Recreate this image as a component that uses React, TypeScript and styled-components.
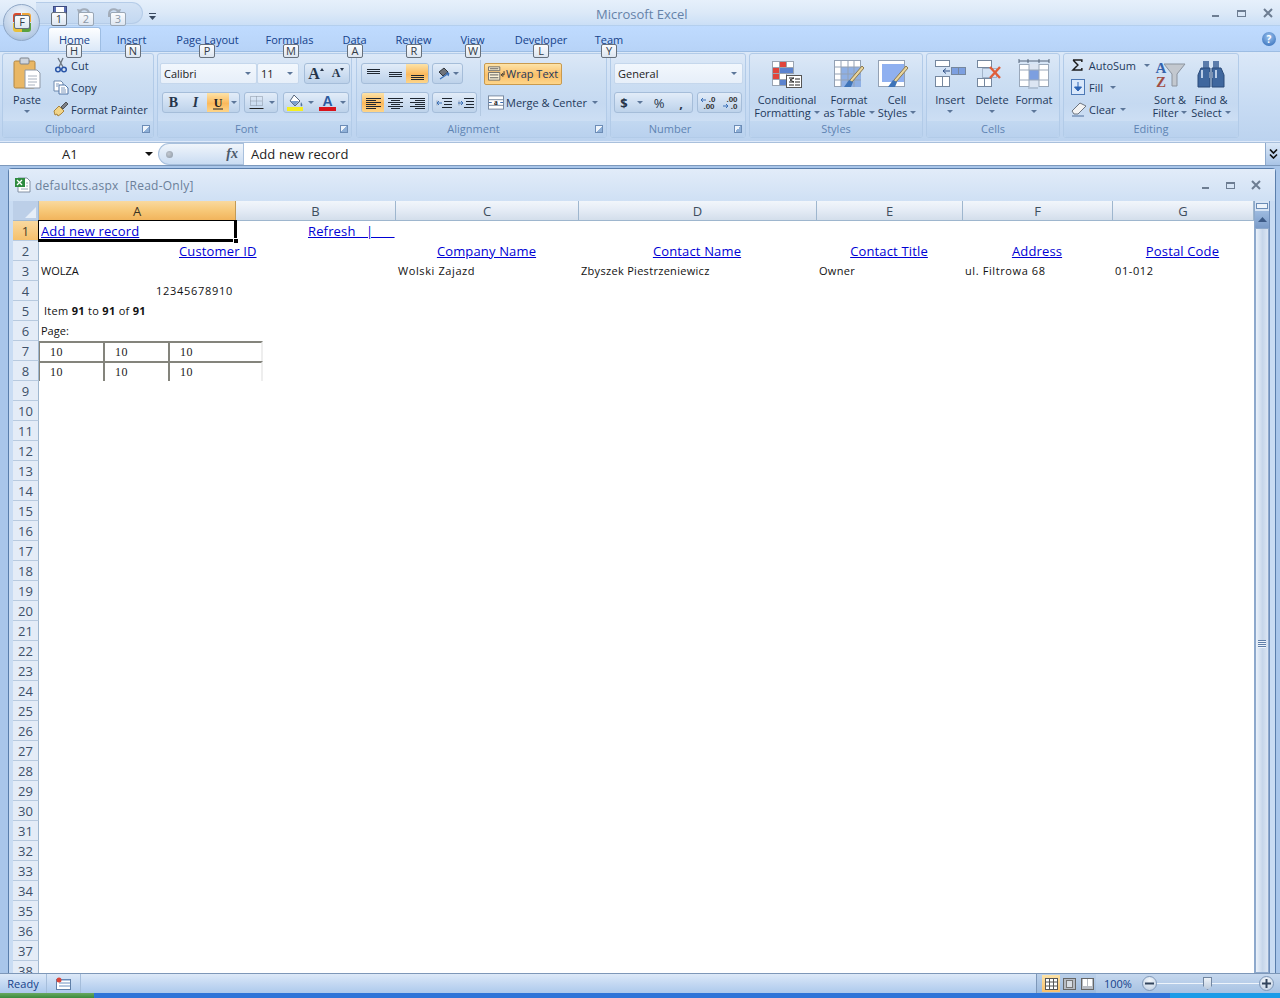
import React from "react";
import styled, { createGlobalStyle, css } from "styled-components";

const UI = `"Open Sans", "Noto Sans", "Liberation Sans", sans-serif`;
const INK = "#15428b";
const DARK = "#1e395b";

const Global = createGlobalStyle`
  html, body { margin: 0; padding: 0; background: #bfdbff; overflow: hidden; }
  *, *::before, *::after { box-sizing: border-box; }
`;

const Page = styled.div`
  position: relative;
  width: 1280px;
  height: 998px;
  overflow: hidden;
  display: flex;
  flex-direction: column;
  font-family: ${UI};
  font-size: 11px;
  color: ${DARK};
  background: #a9c6ea;
`;

/* ---------- title bar ---------- */
const TitleBar = styled.div`
  height: 26px;
  flex: none;
  display: flex;
  align-items: center;
  justify-content: flex-end;
  padding: 0 7px 0 0;
  gap: 16px;
  background: linear-gradient(#e6f0fb, #dce9f8 50%, #cbdff6);
  border-bottom: 1px solid #b4cfee;
`;

const AppTitle = styled.div`
  position: absolute;
  left: 596px;
  top: 5px;
  font-size: 13px;
  color: #6582a8;
`;

const QuickAccess = styled.div`
  position: absolute;
  left: 36px;
  top: 2px;
  width: 107px;
  height: 22px;
  padding: 3px 0 0 17px;
  display: flex;
  align-items: flex-start;
  border-radius: 0 11px 11px 0;
  background: linear-gradient(#d4e3f5, #c3d8f1);
  border: 1px solid #b5cce8;
  border-left: 0;
`;

const QuickSlot = styled.div<{ $w: number }>`
  width: ${(p) => p.$w}px;
  flex: none;
`;

const QuickMenu = styled.div`
  position: absolute;
  left: 149px;
  top: 8px;
`;

const OfficeOrb = styled.div`
  position: absolute;
  left: 3px;
  top: 4px;
  width: 37px;
  height: 37px;
  border-radius: 50%;
  background: radial-gradient(circle at 50% 30%, #f3f7fc, #b9cde6 70%, #8ea9ca);
  border: 1px solid #8fa7c6;
  display: flex;
  align-items: center;
  justify-content: center;
`;

const KeyTip = styled.span<{ $x: number; $y: number; $dim?: boolean }>`
  position: absolute;
  left: ${(p) => p.$x}px;
  top: ${(p) => p.$y}px;
  width: 16px;
  height: 14px;
  line-height: 12px;
  text-align: center;
  font-size: 11px;
  border: 1px solid ${(p) => (p.$dim ? "#9aa7b6" : "#66707c")};
  border-radius: 2px;
  color: ${(p) => (p.$dim ? "#8b97a6" : "#333c48")};
  background: linear-gradient(#fbfcfe, #dde6f1);
  z-index: 5;
`;

/* ---------- tabs ---------- */
const TabRow = styled.div`
  height: 25px;
  flex: none;
  display: flex;
  align-items: flex-end;
  padding-left: 48px;
  background: linear-gradient(#bfdbff, #b7d3f7);
`;

const Tab = styled.div<{ $active?: boolean; $w: number }>`
  width: ${(p) => p.$w}px;
  height: 24px;
  line-height: 25px;
  text-align: center;
  font-size: 11px;
  color: ${INK};
  ${(p) =>
    p.$active &&
    css`
      line-height: 23px;
      background: linear-gradient(#fdfeff, #dbe8f8);
      border: 1px solid #9dbde3;
      border-bottom: 0;
      border-radius: 3px 3px 0 0;
    `}
`;

const HelpDot = styled.div`
  position: absolute;
  left: 1262px;
  top: 32px;
  width: 14px;
  height: 14px;
  border-radius: 50%;
  background: radial-gradient(circle at 50% 35%, #9cc3ef, #2a66b5);
  color: #fff;
  font-size: 10px;
  font-weight: 700;
  line-height: 14px;
  text-align: center;
`;

/* ---------- ribbon ---------- */
const Ribbon = styled.div`
  height: 91px;
  flex: none;
  display: flex;
  padding: 1px 0 0 2px;
  background: linear-gradient(#dbe8f8, #c7dbf3 60%, #bcd3ef);
  border-top: 1px solid #9dbde3;
  border-bottom: 1px solid #dfeafa;
`;

const Group = styled.div<{ $w: number; $gap?: number }>`
  width: ${(p) => p.$w}px;
  margin-right: ${(p) => p.$gap ?? 3}px;
  height: 85px;
  flex: none;
  display: flex;
  flex-direction: column;
  border: 1px solid #b2cbe8;
  border-radius: 3px;
  background: linear-gradient(#dce8f7, #cddff3 30%, #c5d9f1 60%, #d3e3f6);
`;

const GroupBody = styled.div<{ $pad?: number }>`
  flex: 1;
  display: flex;
  min-height: 0;
  padding-left: ${(p) => p.$pad ?? 0}px;
`;

const GroupFoot = styled.div<{ $launcher?: boolean }>`
  position: relative;
  height: 16px;
  flex: none;
  line-height: 15px;
  text-align: center;
  padding-right: ${(p) => (p.$launcher ? 16 : 0)}px;
  color: #5f84b3;
  font-size: 11px;
  background: linear-gradient(#c2d8f1, #b9d1ee);
  border-radius: 0 0 2px 2px;
`;

const Launcher = styled.span`
  position: absolute;
  right: 3px;
  top: 4px;
  width: 8px;
  height: 8px;
  border: 1px solid #6c8cb6;
  background: linear-gradient(135deg, #eef4fb 50%, #8fb0d8 50%);
`;

const Column = styled.div<{ $w?: number; $top?: number; $gap?: number; $left?: number }>`
  display: flex;
  flex-direction: column;
  flex: none;
  ${(p) => p.$w && `width: ${p.$w}px;`}
  padding-top: ${(p) => p.$top ?? 0}px;
  margin-left: ${(p) => p.$left ?? 0}px;
  gap: ${(p) => p.$gap ?? 0}px;
`;

const Line = styled.div<{ $gap?: number; $left?: number }>`
  display: flex;
  align-items: center;
  gap: ${(p) => p.$gap ?? 0}px;
  margin-left: ${(p) => p.$left ?? 0}px;
`;

const SmallCmd = styled.div<{ $gap?: number; $left?: number }>`
  height: 22px;
  display: flex;
  align-items: center;
  gap: ${(p) => p.$gap ?? 2}px;
  padding-left: ${(p) => p.$left ?? 0}px;
  font-size: 11px;
  color: ${DARK};
  white-space: nowrap;
`;

const Caret = styled.span<{ $m?: number }>`
  display: inline-block;
  width: 0;
  height: 0;
  margin-left: ${(p) => p.$m ?? 3}px;
  border-left: 3px solid transparent;
  border-right: 3px solid transparent;
  border-top: 3px solid #5c7699;
  flex: none;
`;

const BigCaret = styled(Caret)`
  margin-top: 4px;
  margin-left: 0;
`;

const NameCaret = styled(Caret)`
  margin-left: 0;
  border-top: 4px solid #111;
  border-left-width: 4px;
  border-right-width: 4px;
`;

const Big = styled.div<{ $w: number }>`
  width: ${(p) => p.$w}px;
  flex: none;
  display: flex;
  flex-direction: column;
  align-items: center;
  text-align: center;
  padding-top: 3px;
  line-height: 13px;
  font-size: 11px;
  white-space: nowrap;
  color: ${DARK};
`;

const BigIcon = styled.div<{ $nudge?: number }>`
  height: 34px;
  margin-bottom: 2px;
  margin-right: ${(p) => p.$nudge ?? 0}px;
  display: flex;
  align-items: center;
  justify-content: center;
`;

const Combo = styled.div<{ $w: number }>`
  width: ${(p) => p.$w}px;
  height: 21px;
  display: flex;
  align-items: center;
  justify-content: space-between;
  padding: 0 5px 0 3px;
  background: linear-gradient(#f2f7fd, #e7eff9);
  border: 1px solid #c5d7ec;
  border-radius: 2px;
  color: #222;
  font-size: 11px;
`;

const BtnGroup = styled.div<{ $left?: number }>`
  display: flex;
  height: 21px;
  flex: none;
  margin-left: ${(p) => p.$left ?? 0}px;
  border: 1px solid #a5bdd9;
  border-radius: 3px;
  background: linear-gradient(#e2ecf8, #cfdff2 50%, #bdd2ea);
  overflow: hidden;
`;

const ToolBtn = styled.div<{ $w?: number; $on?: boolean }>`
  width: ${(p) => p.$w ?? 22}px;
  display: flex;
  align-items: center;
  justify-content: center;
  color: #26354a;
  ${(p) =>
    p.$on &&
    css`
      background: linear-gradient(#fde3a8, #fbb95c 55%, #fdd58a);
    `}
`;

const Glyph = styled.span<{ $size: number; $serif?: boolean; $italic?: boolean; $weight?: number }>`
  font-family: ${(p) => (p.$serif ? `"Liberation Serif", serif` : UI)};
  font-size: ${(p) => p.$size}px;
  font-style: ${(p) => (p.$italic ? "italic" : "normal")};
  font-weight: ${(p) => p.$weight ?? 700};
`;

const TinyUp = styled.span`
  align-self: flex-start;
  margin: 4px 0 0 0;
  width: 0;
  height: 0;
  border-left: 2px solid transparent;
  border-right: 2px solid transparent;
  border-bottom: 3px solid #26354a;
`;

const TinyDown = styled(TinyUp)`
  border-bottom: 0;
  border-top: 3px solid #26354a;
`;

const WrapBtn = styled.div`
  width: 78px;
  height: 22px;
  display: flex;
  align-items: center;
  gap: 1px;
  padding: 0 0 1px 3px;
  border: 1px solid #c99a4e;
  border-radius: 2px;
  background: linear-gradient(#fde3a8, #fbc069 55%, #fdd58a);
  color: ${DARK};
  font-size: 11px;
`;

const Divider = styled.div`
  width: 1px;
  height: 56px;
  margin: 6px 3px 0 3px;
  background: #b3c9e2;
  flex: none;
`;

/* ---------- formula bar ---------- */
const FormulaRow = styled.div`
  height: 24px;
  flex: none;
  display: flex;
  align-items: stretch;
  background: #fff;
  border-top: 1px solid #a9c0dc;
  border-bottom: 1px solid #7d99bc;
  font-size: 13px;
  color: #222;
`;

const NameBox = styled.div`
  width: 158px;
  display: flex;
  align-items: center;
  justify-content: space-between;
  padding: 0 5px 0 62px;
`;

const FxPill = styled.div`
  width: 85px;
  background: linear-gradient(#f0f5fb, #cadcf2);
  border-radius: 11px 0 0 11px;
  border: 1px solid #a8c0dd;
  border-right: 0;
  display: flex;
  align-items: center;
  justify-content: space-between;
  padding: 0 5px 0 7px;
  font-family: "Liberation Serif", serif;
  font-size: 14px;
  font-style: italic;
  font-weight: 700;
  color: #4c5a6c;
`;

const FxDot = styled.span`
  width: 7px;
  height: 7px;
  border-radius: 50%;
  background: radial-gradient(circle at 40% 40%, #c2c8d0, #8b96a4);
`;

const FormulaInput = styled.div`
  flex: 1;
  line-height: 22px;
  padding-left: 7px;
  letter-spacing: 0.1px;
  border-left: 1px solid #a8c0dd;
`;

const ExpandBtn = styled.div`
  width: 15px;
  display: flex;
  align-items: center;
  justify-content: center;
  background: linear-gradient(#dce9f8, #a9c4e6);
  border-left: 1px solid #8eaacd;
`;

/* ---------- workbook window ---------- */
const Workbook = styled.div`
  flex: 1;
  min-height: 0;
  margin: 2px 4px 0 8px;
  display: flex;
  flex-direction: column;
  padding: 0 5px 0 4px;
  background: #c9dcf3;
  border: 1px solid #5a7eab;
  border-bottom: 0;
  border-radius: 4px 4px 0 0;
`;

const WinTitle = styled.div`
  height: 32px;
  flex: none;
  display: flex;
  align-items: center;
  gap: 4px;
  margin: 0 -5px 0 -4px;
  padding: 0 14px 0 6px;
  background: linear-gradient(#e2ecf9, #cfe0f4);
  color: #6b7f99;
  font-size: 12px;
  letter-spacing: 0.25px;
`;

const WinName = styled.span`
  flex: 1;
  white-space: pre;
`;

const WinButtons = styled.div`
  display: flex;
  gap: 15px;
  align-items: center;
`;

const SheetArea = styled.div`
  flex: 1;
  min-height: 0;
  display: flex;
`;

const Sheet = styled.div`
  flex: 1;
  min-width: 0;
  overflow: hidden;
  background: #fff;
  display: flex;
  flex-direction: column;
`;

const HeaderRow = styled.div`
  height: 20px;
  flex: none;
  display: flex;
`;

const Corner = styled.div`
  width: 26px;
  flex: none;
  position: relative;
  background: #bccfe8;
  border-right: 1px solid #9eb6ce;
  border-bottom: 1px solid #9eb6ce;
  &::after {
    content: "";
    position: absolute;
    right: 2px;
    bottom: 2px;
    border-left: 11px solid transparent;
    border-bottom: 11px solid #e6eef8;
  }
`;

const ColHead = styled.div<{ $w: number; $on?: boolean }>`
  width: ${(p) => p.$w}px;
  flex: none;
  font-size: 13px;
  line-height: 20px;
  text-align: center;
  color: ${(p) => (p.$on ? "#3c3322" : "#3e4d5e")};
  background: ${(p) =>
    p.$on
      ? "linear-gradient(#f9d99f, #f7c878 50%, #f1b45c)"
      : "linear-gradient(#f2f6fb, #e4ebf5 50%, #d3deeb)"};
  border-right: 1px solid ${(p) => (p.$on ? "#c29a55" : "#9eb6ce")};
  border-bottom: 1px solid ${(p) => (p.$on ? "#c29a55" : "#9eb6ce")};
`;

const Row = styled.div`
  height: 20px;
  flex: none;
  display: flex;
`;

const RowHead = styled.div<{ $on?: boolean }>`
  width: 26px;
  flex: none;
  text-align: center;
  font-size: 13px;
  line-height: 20px;
  color: ${(p) => (p.$on ? "#4d3f26" : "#3e5068")};
  background: ${(p) => (p.$on ? "linear-gradient(#f9d99f, #f5c06c)" : "#e4ecf7")};
  border-right: 1px solid ${(p) => (p.$on ? "#c29a55" : "#9eb6ce")};
  border-bottom: 1px solid #b8cadf;
`;

const Cell = styled.div<{ $w: number; $pad?: number; $ls?: number }>`
  width: ${(p) => p.$w}px;
  flex: none;
  padding-left: ${(p) => p.$pad ?? 2}px;
  line-height: 19px;
  font-size: 11px;
  letter-spacing: ${(p) => p.$ls ?? 0}px;
  color: #111;
  white-space: pre;
`;

const HeadCell = styled(Cell)`
  padding: 0 2px 0 0;
  text-align: center;
`;

const ActiveCell = styled(Cell)`
  position: relative;
  &::after {
    content: "";
    position: absolute;
    left: -1px;
    top: -1px;
    width: 199px;
    height: 22px;
    border: solid #000;
    border-width: 1px 3px 3px 1px;
  }
  &::before {
    content: "";
    position: absolute;
    left: 194px;
    top: 17px;
    width: 6px;
    height: 6px;
    background: #000;
    border: 1px solid #fff;
    z-index: 1;
  }
`;

const LinkText = styled.span`
  color: #0000d4;
  text-decoration: underline;
  font-size: 13px;
  letter-spacing: 0.15px;
  line-height: 21px;
`;

const PagerCell = styled.div<{ $w: number; $last?: boolean }>`
  width: ${(p) => p.$w}px;
  flex: none;
  padding-left: 10px;
  font-family: "Liberation Serif", serif;
  font-size: 12px;
  letter-spacing: 0.6px;
  line-height: 19px;
  color: #222;
  border-top: 2px solid #84847c;
  border-right: 2px solid ${(p) => (p.$last ? "#eeeeee" : "#84847c")};
`;

const PagerFirst = styled(PagerCell)`
  border-left: 1px solid #84847c;
`;

/* ---------- scrollbar ---------- */
const VScroll = styled.div`
  width: 16px;
  flex: none;
  display: flex;
  flex-direction: column;
  background: #d8e5f5;
  border-left: 1px solid #8ea9cc;
  border-right: 1px solid #6f8fbb;
`;

const ScrollSplit = styled.div`
  height: 6px;
  flex: none;
  margin: 2px 1px;
  background: #eef4fb;
  border: 1px solid #6b8cb6;
`;

const ScrollUp = styled.div`
  height: 17px;
  flex: none;
  display: flex;
  justify-content: center;
  align-items: center;
  background: linear-gradient(#9dbadf, #7b9cc9);
`;

const ScrollThumb = styled.div`
  flex: 1;
  display: flex;
  align-items: center;
  justify-content: center;
  padding-top: 86px;
  background: linear-gradient(90deg, #eaf1fa, #c6d6ea 55%, #dce6f3);
  border: 1px solid #8ea9cc;
`;

const Grip = styled.div`
  width: 8px;
  height: 8px;
  background: repeating-linear-gradient(#5f7ea8 0 1px, #eef4fb 1px 2px);
`;

/* ---------- status bar ---------- */
const StatusBar = styled.div`
  height: 20px;
  flex: none;
  display: flex;
  align-items: center;
  background: linear-gradient(#dde9f8, #c6daf3 45%, #adc9ec);
  border-top: 1px solid #7d97b8;
  color: ${INK};
  font-size: 11px;
`;

const StatusCell = styled.div<{ $w: number }>`
  width: ${(p) => p.$w}px;
  height: 100%;
  flex: none;
  display: flex;
  align-items: center;
  justify-content: center;
  border-right: 1px solid #a6bedb;
`;

const StatusFill = styled.div`
  flex: 1;
`;

const ViewSwitch = styled.div`
  width: 60px;
  height: 100%;
  display: flex;
  align-items: center;
  padding-left: 5px;
  background: linear-gradient(#bcd1ea, #9cb9dc);
  border-left: 1px solid #7d97b8;
`;

const ViewBtn = styled.div<{ $on?: boolean }>`
  width: 18px;
  height: 17px;
  display: flex;
  align-items: center;
  justify-content: center;
  ${(p) => p.$on && `background: linear-gradient(#fde3a8, #fbc069);`}
`;

const Zoom = styled.div`
  width: 184px;
  display: flex;
  align-items: center;
  padding-left: 8px;
  color: ${INK};
  height: 100%;
  background: linear-gradient(#c6d8ee, #a7c2e3);
`;

const ZoomBtn = styled.div<{ $left: number }>`
  width: 15px;
  height: 15px;
  margin-left: ${(p) => p.$left}px;
  flex: none;
  border-radius: 50%;
  border: 1px solid #7f97b7;
  background: radial-gradient(circle at 50% 30%, #f4f8fc, #bccde2);
  display: flex;
  align-items: center;
  justify-content: center;
`;

const ZoomTrack = styled.div`
  flex: none;
  width: 102px;
  height: 1px;
  background: #eef4fb;
  position: relative;
`;

const ZoomThumb = styled.span`
  position: absolute;
  left: 46px;
  top: -6px;
  width: 9px;
  height: 13px;
  background: linear-gradient(#eef3f9, #bccbdd);
  border: 1px solid #71859f;
  clip-path: polygon(0 0, 100% 0, 100% 70%, 50% 100%, 0 70%);
`;

const TaskBar = styled.div`
  height: 5px;
  flex: none;
  display: flex;
  justify-content: space-between;
  background: #2f74d8;
`;

const StartEdge = styled.div`
  width: 94px;
  background: linear-gradient(#69a85f, #3a8a3c);
`;

const TrayEdge = styled.div`
  width: 110px;
  background: #1a9be8;
`;

/* ---------- icons (drawings only) ---------- */
const Save = () => (
  <svg width="14" height="12" viewBox="0 0 14 12">
    <rect x="0.5" y="0.5" width="13" height="11" fill="#5b6fb5" stroke="#3d4a80" />
    <rect x="3" y="1" width="8" height="5" fill="#fff" />
  </svg>
);
const Undo = ({ flip }: { flip?: boolean }) => (
  <svg width="14" height="12" viewBox="0 0 14 12" fill="none" style={flip ? { transform: "scaleX(-1)" } : undefined}>
    <path d="M3 6c1-4 9-4 9 2v3" stroke="#a2acb9" strokeWidth="2" />
    <path d="M0 3l5 1-3 5z" fill="#a2acb9" />
  </svg>
);
const QuickCaret = () => (
  <svg width="7" height="7" viewBox="0 0 7 7">
    <path d="M0 0.5h7" stroke="#3a4a60" />
    <path d="M0 3h7L3.5 7z" fill="#3a4a60" />
  </svg>
);
const Paste = () => (
  <svg width="30" height="34" viewBox="0 0 30 34">
    <rect x="2" y="4" width="21" height="27" rx="1.5" fill="#e9b765" stroke="#b08543" />
    <rect x="8" y="1" width="9" height="6" rx="1" fill="#cfd5dd" stroke="#7d838c" />
    <path d="M13 13h12l3 3v15H13z" fill="#fff" stroke="#8e98a6" />
    <path d="M16 19h9M16 22h9M16 25h9M16 28h7" stroke="#a9b2bf" />
  </svg>
);
const Cut = () => (
  <svg width="16" height="16" viewBox="0 0 16 16" fill="none">
    <path d="M5 1l5 9M10 1L6 10" stroke="#6d7680" strokeWidth="1.3" />
    <circle cx="5" cy="12.5" r="2.3" stroke="#2b56a8" strokeWidth="1.5" />
    <circle cx="11" cy="12.5" r="2.3" stroke="#2b56a8" strokeWidth="1.5" />
  </svg>
);
const Copy = () => (
  <svg width="16" height="16" viewBox="0 0 16 16">
    <path d="M1 2h7l2 2v8H1z" fill="#fff" stroke="#6d88ad" />
    <path d="M6 6h6l3 3v6H6z" fill="#fff" stroke="#5377a8" />
    <path d="M8 9h4M8 11h5M8 13h5M3 5h3M3 7h2" stroke="#7e98bd" />
  </svg>
);
const Brush = () => (
  <svg width="16" height="16" viewBox="0 0 16 16">
    <path d="M1 10l5-5 5 5-3 3-3 2-1-2-2 1z" fill="#f1d488" stroke="#a8843f" />
    <path d="M8 6l5-5 2 2-5 5z" fill="#7c7f86" stroke="#4f5257" />
  </svg>
);
const Underline = () => (
  <svg width="14" height="14" viewBox="0 0 14 14">
    <text x="7" y="10.5" textAnchor="middle" fontSize="12" fontWeight="700" fontFamily="Liberation Serif" fill="#222">U</text>
    <path d="M2 13h10" stroke="#222" />
  </svg>
);
const Borders = () => (
  <svg width="15" height="15" viewBox="0 0 15 15" fill="none">
    <path d="M1.5 1.5h12v9h-12zM7.5 1.5v9M1.5 6h12" stroke="#8793a3" strokeDasharray="1 1" />
    <path d="M0.5 13.5h14" stroke="#222" />
  </svg>
);
const Fill = () => (
  <svg width="17" height="17" viewBox="0 0 17 17">
    <path d="M7 1l6 6-5 5-5-5z" fill="#fff" stroke="#55657b" />
    <path d="M3 7h9l-4 4.5z" fill="#7c9ecb" />
    <path d="M14 8c1 2 2 3 1 4s-2 0-1-4z" fill="#54729b" />
    <rect x="0" y="13" width="16" height="4" fill="#f4ee22" />
  </svg>
);
const FontColor = () => (
  <svg width="17" height="17" viewBox="0 0 17 17">
    <text x="8.5" y="11.5" textAnchor="middle" fontSize="14" fontWeight="700" fontFamily="Liberation Sans" fill="#2c5a9e">A</text>
    <rect x="0" y="13" width="17" height="4" fill="#d8141c" />
  </svg>
);
const Lines = ({ rows }: { rows: number[] }) => (
  <svg width="15" height="14" viewBox="0 0 15 14">
    {rows.map((y) => (
      <path key={y} d={`M1 ${y + 0.5}H14`} stroke="#1f2731" />
    ))}
  </svg>
);
const Aligned = ({ side }: { side: "l" | "c" | "r" }) => {
  const rows = [2, 4, 6, 8, 10, 12];
  return (
    <svg width="15" height="14" viewBox="0 0 15 14">
      {rows.map((y, i) => {
        const short = i % 2 === 1;
        const a = side === "l" ? 0 : side === "c" ? (short ? 3 : 0) : short ? 5 : 0;
        const b = side === "l" ? (short ? 10 : 15) : side === "c" ? (short ? 12 : 15) : 15;
        return <path key={y} d={`M${a} ${y + 0.5}H${b}`} stroke="#1f2731" />;
      })}
    </svg>
  );
};
const Orient = () => (
  <svg width="15" height="15" viewBox="0 0 15 15" fill="none">
    <path d="M2 6l5-4 4 4-5 4z" fill="#70747c" stroke="#30353b" />
    <path d="M3 13l9-6m0 0l-3 0m3 0l-1 3" stroke="#3a6fb6" strokeWidth="1.2" />
  </svg>
);
const Indent = ({ flip }: { flip?: boolean }) => (
  <svg width="16" height="14" viewBox="0 0 16 14">
    <path d="M6 2.5h10M8 5.5h8M8 8.5h8M6 11.5h10" stroke="#1f2731" strokeWidth="1.2" />
    <path d="M1 4.5v5" stroke="#9aa5b4" />
    {flip ? <path d="M0 7h5M3 5l2 2-2 2" stroke="#3a6fb6" fill="none" /> : <path d="M6 7H1M3 5L1 7l2 2" stroke="#3a6fb6" fill="none" />}
  </svg>
);
const WrapIcon = () => (
  <svg width="17" height="17" viewBox="0 0 18 17" fill="none">
    <path d="M0.5 1.5h12v4h-12zM0.5 7.5h12v8h-12z" fill="#fdf3d8" stroke="#6a6a6a" />
    <path d="M2 3.5h9M2 10h9M2 13h9" stroke="#555" />
    <path d="M17 6v4h-3m0 0l2-2m-2 2l2 2" stroke="#333" />
  </svg>
);
const MergeIcon = () => (
  <svg width="16" height="15" viewBox="0 0 17 15">
    <rect x="0.5" y="0.5" width="16" height="14" fill="#fff" stroke="#76879e" />
    <path d="M0 4.5h17M0 10.5h17" stroke="#76879e" />
    <text x="8.5" y="10" fontSize="8" textAnchor="middle" fontFamily="Liberation Serif" fontWeight="700" fill="#222">a</text>
    <path d="M1 7.5h3M13 7.5h3" stroke="#2f62aa" />
  </svg>
);
const DecUp = () => (
  <svg width="18" height="14" viewBox="0 0 18 14">
    <path d="M1 4h5M1 4l2-2M1 4l2 2" stroke="#3a6fb6" fill="none" />
    <text x="12" y="6" fontSize="8" fontWeight="700" textAnchor="middle" fontFamily="Liberation Sans" fill="#333">.0</text>
    <text x="9" y="13" fontSize="8" fontWeight="700" textAnchor="middle" fontFamily="Liberation Sans" fill="#333">.00</text>
  </svg>
);
const DecDown = () => (
  <svg width="18" height="14" viewBox="0 0 18 14">
    <text x="10" y="6" fontSize="8" fontWeight="700" textAnchor="middle" fontFamily="Liberation Sans" fill="#333">.00</text>
    <path d="M1 10h5M6 10L4 8M6 10l-2 2" stroke="#3a6fb6" fill="none" />
    <text x="12" y="13" fontSize="8" fontWeight="700" textAnchor="middle" fontFamily="Liberation Sans" fill="#333">.0</text>
  </svg>
);
const CondFormat = () => (
  <svg width="30" height="27" viewBox="0 0 30 27">
    <g stroke="#9aa4b2" fill="#fff">
      <rect x="0.5" y="0.5" width="7" height="6" />
      <rect x="7.5" y="0.5" width="7" height="6" fill="#e0453c" />
      <rect x="14.5" y="0.5" width="7" height="6" />
      <rect x="0.5" y="6.5" width="7" height="6" fill="#e0453c" />
      <rect x="7.5" y="6.5" width="14" height="6" fill="#5b83cf" />
      <rect x="0.5" y="12.5" width="7" height="6" fill="#e0453c" />
      <rect x="7.5" y="12.5" width="7" height="6" />
      <rect x="0.5" y="18.5" width="7" height="6" />
      <rect x="7.5" y="18.5" width="7" height="6" fill="#5b83cf" />
    </g>
    <rect x="14.5" y="14.5" width="15" height="12" fill="#fff" stroke="#555" />
    <path d="M17 17h5l-4 2 4 2h-5M17 24h5M23 18h5M23 21h5M23 24h5" stroke="#222" fill="none" />
  </svg>
);
const TableIcon = () => (
  <svg width="30" height="28" viewBox="0 0 30 28">
    <rect x="0.5" y="0.5" width="26" height="26" fill="#fff" stroke="#93a1b4" />
    <rect x="7" y="7" width="20" height="20" fill="#8fb0e4" />
    <path d="M0 7h27M0 14h27M0 20h27M7 0v27M14 0v27M20 0v27" stroke="#93a1b4" />
    <path d="M28 6L16 20l-1 3 3-1L30 8z" fill="#e9d59e" stroke="#8c7a4f" />
    <path d="M15 20l-5 7h7l2-5z" fill="#3e74b8" />
  </svg>
);
const StylesIcon = () => (
  <svg width="30" height="28" viewBox="0 0 30 28">
    <rect x="0.5" y="0.5" width="26" height="26" fill="#fff" stroke="#93a1b4" />
    <rect x="4" y="4" width="22" height="18" fill="#8fb0f0" />
    <path d="M28 6L16 20l-1 3 3-1L30 8z" fill="#e9d59e" stroke="#8c7a4f" />
    <path d="M15 20l-5 7h7l2-5z" fill="#3e74b8" />
  </svg>
);
const InsertIcon = () => (
  <svg width="32" height="28" viewBox="0 0 32 28">
    <g fill="#fff" stroke="#75879e">
      <rect x="1.5" y="0.5" width="14" height="6" />
      <rect x="1.5" y="16.5" width="7" height="10" />
      <rect x="8.5" y="16.5" width="7" height="10" />
      <rect x="17.5" y="7.5" width="7" height="7" fill="#7c9fe0" />
      <rect x="24.5" y="7.5" width="7" height="7" fill="#7c9fe0" />
    </g>
    <path d="M16 11H9m0 0l3-2.5M9 11l3 2.5" stroke="#2e4f85" fill="none" />
  </svg>
);
const DeleteIcon = () => (
  <svg width="32" height="28" viewBox="0 0 32 28">
    <g fill="#fff" stroke="#75879e">
      <rect x="1.5" y="0.5" width="14" height="7" />
      <rect x="1.5" y="18.5" width="7" height="8" />
      <rect x="8.5" y="18.5" width="7" height="8" />
    </g>
    <rect x="6.5" y="8.5" width="14" height="9" fill="none" stroke="#75879e" strokeDasharray="1 1" />
    <path d="M14 7l10 11M24 7L14 18" stroke="#e05f3a" strokeWidth="2.4" />
  </svg>
);
const FormatIcon = () => (
  <svg width="32" height="30" viewBox="0 0 32 30">
    <path d="M1 2h30M1 0v4M31 0v4M10 0v4M21 0v4" stroke="#55657b" />
    <rect x="1.5" y="5.5" width="29" height="22" fill="#fff" stroke="#9aa8ba" />
    <rect x="11" y="5" width="10" height="23" fill="#dce5f2" />
    <rect x="11" y="11" width="10" height="10" fill="#7c9fe0" />
    <path d="M1 11h30M1 21h30M11 5v23M21 5v23M10 29h10" stroke="#9aa8ba" />
  </svg>
);
const SortIcon = () => (
  <svg width="32" height="30" viewBox="0 0 32 30">
    <text x="7" y="14" fontSize="15" fontWeight="700" textAnchor="middle" fontFamily="Liberation Serif" fill="#3563ad">A</text>
    <text x="7" y="28" fontSize="15" fontWeight="700" textAnchor="middle" fontFamily="Liberation Serif" fill="#a04d45">Z</text>
    <path d="M10 5h21l-8 10v12h-5V15z" fill="#c3c8cf" stroke="#8b939e" />
  </svg>
);
const Binoculars = () => (
  <svg width="28" height="27" viewBox="0 0 28 27">
    <rect x="6" y="0" width="6" height="7" fill="#5b7cab" />
    <rect x="16" y="0" width="6" height="7" fill="#5b7cab" />
    <path d="M4 7h9v19H1v-12zM15 7h9l3 7v12H15z" fill="#3f679e" stroke="#2a4a78" />
    <rect x="12" y="11" width="4" height="6" fill="#7b92b3" />
    <path d="M5 9v8M19 9v8" stroke="#b9cce6" strokeWidth="2" />
  </svg>
);
const SigmaIcon = () => (
  <svg width="14" height="14" viewBox="0 0 14 14">
    <path d="M2 2h9v2M2 2l5 5-5 5h9v-2" fill="none" stroke="#1d1d1d" strokeWidth="1.5" />
  </svg>
);
const FillIcon = () => (
  <svg width="14" height="16" viewBox="0 0 14 16">
    <rect x="0.5" y="0.5" width="13" height="15" fill="#d9e8fb" stroke="#4d79b5" />
    <path d="M7 3v8M3.5 8L7 12l3.5-4z" fill="#2b63b4" stroke="#2b63b4" />
  </svg>
);
const Eraser = () => (
  <svg width="17" height="15" viewBox="0 0 17 15">
    <path d="M1 9l8-8 6 3-8 8H3z" fill="#f3f3f3" stroke="#6c7480" />
    <path d="M1 14h12" stroke="#4f6f9c" />
  </svg>
);
const XlDoc = () => (
  <svg width="16" height="16" viewBox="0 0 16 16">
    <path d="M3 1h9l3 3v11H3z" fill="#fff" stroke="#8290a3" />
    <rect x="0" y="1" width="10" height="9" fill="#2e8b3f" />
    <path d="M2 3l5 5M7 3L2 8" stroke="#fff" strokeWidth="1.3" />
    <path d="M6 12h7M11 6h2M11 9h2" stroke="#9ca8b8" />
  </svg>
);
const OrbLogo = () => (
  <svg width="24" height="24" viewBox="0 0 24 24">
    <path d="M3 5a3 3 0 0 1 3-3h5v9H3z" fill="#d94a2c" />
    <path d="M12 2h6a3 3 0 0 1 3 3v6h-9z" fill="#f0a73a" />
    <path d="M3 12h9v9H6a3 3 0 0 1-3-3z" fill="#e9c13c" />
    <path d="M12 12h9v6a3 3 0 0 1-3 3h-6z" fill="#5aa13f" />
  </svg>
);
const Minimize = ({ c = "#6d7d92" }: { c?: string }) => (
  <svg width="10" height="10" viewBox="0 0 10 10">
    <rect x="1" y="7" width="7" height="2" fill={c} />
  </svg>
);
const Restore = ({ c = "#6d7d92" }: { c?: string }) => (
  <svg width="10" height="10" viewBox="0 0 10 10" fill="none">
    <rect x="0.5" y="2.5" width="8" height="6" stroke={c} />
    <rect x="0" y="2" width="9" height="2" fill={c} />
  </svg>
);
const Close = ({ c = "#6d7d92" }: { c?: string }) => (
  <svg width="10" height="10" viewBox="0 0 10 10">
    <path d="M1 1l8 8M9 1L1 9" stroke={c} strokeWidth="2" />
  </svg>
);
const Macro = () => (
  <svg width="15" height="13" viewBox="0 0 15 13">
    <rect x="0.5" y="2.5" width="14" height="10" fill="#fff" stroke="#5f7fa8" />
    <path d="M5 3h9M3 6h11M3 9h11" stroke="#6f90c0" />
    <circle cx="3" cy="3" r="2.5" fill="#d9453a" />
  </svg>
);
const ViewNormal = () => (
  <svg width="13" height="12" viewBox="0 0 13 12" fill="none">
    <rect x="0.5" y="0.5" width="12" height="11" fill="#fff" stroke="#555" />
    <path d="M0 4h13M0 8h13M4.5 0v12M8.5 0v12" stroke="#555" />
  </svg>
);
const ViewPage = () => (
  <svg width="13" height="12" viewBox="0 0 13 12">
    <rect x="0.5" y="0.5" width="12" height="11" fill="#b7bcc4" stroke="#666" />
    <rect x="3.5" y="2.5" width="6" height="7" fill="#d8dde4" stroke="#777" />
  </svg>
);
const ViewBreak = () => (
  <svg width="13" height="12" viewBox="0 0 13 12">
    <rect x="0.5" y="0.5" width="12" height="11" fill="#b7bcc4" stroke="#666" />
    <rect x="2" y="1" width="4" height="7" fill="#fff" />
    <rect x="7" y="1" width="4" height="7" fill="#fff" />
  </svg>
);
const ZoomMinus = () => (
  <svg width="9" height="9" viewBox="0 0 9 9">
    <path d="M0 4.5h9" stroke="#32445c" strokeWidth="2" />
  </svg>
);
const ZoomPlus = () => (
  <svg width="9" height="9" viewBox="0 0 9 9">
    <path d="M0 4.5h9M4.5 0v9" stroke="#32445c" strokeWidth="2" />
  </svg>
);
const DoubleChevron = () => (
  <svg width="9" height="10" viewBox="0 0 9 10" fill="none">
    <path d="M1 0.5l3.5 3.5L8 0.5M1 5.5l3.5 3.5L8 5.5" stroke="#111" strokeWidth="1.6" />
  </svg>
);
const ScrollArrow = () => (
  <svg width="9" height="5" viewBox="0 0 9 5">
    <path d="M4.5 0L9 5H0z" fill="#3c5a86" />
  </svg>
);

/* ---------- data ---------- */
const COLUMNS = [
  { name: "A", w: 197 },
  { name: "B", w: 160 },
  { name: "C", w: 183 },
  { name: "D", w: 238 },
  { name: "E", w: 146 },
  { name: "F", w: 150 },
  { name: "G", w: 141 },
];

const TABS = [
  { label: "Home", w: 53, active: true },
  { label: "Insert", w: 61 },
  { label: "Page Layout", w: 91 },
  { label: "Formulas", w: 73 },
  { label: "Data", w: 57 },
  { label: "Review", w: 61 },
  { label: "View", w: 57 },
  { label: "Developer", w: 80 },
  { label: "Team", w: 56 },
];

const KEYTIPS: [string, number, number][] = [
  ["H", 66, 44],
  ["N", 125, 44],
  ["P", 199, 44],
  ["M", 283, 44],
  ["A", 347, 44],
  ["R", 406, 44],
  ["W", 465, 44],
  ["L", 533, 44],
  ["Y", 601, 44],
];

const EMPTY_ROWS = Array.from({ length: 30 }, (_, i) => i + 9);

export default function App() {
  return (
    <Page>
      <Global />
      <TitleBar>
        <Minimize />
        <Restore />
        <Close />
      </TitleBar>
      <AppTitle>Microsoft Excel</AppTitle>
      <QuickAccess>
        <QuickSlot $w={24}><Save /></QuickSlot>
        <QuickSlot $w={30}><Undo /></QuickSlot>
        <QuickSlot $w={20}><Undo flip /></QuickSlot>
      </QuickAccess>
      <QuickMenu><QuickCaret /></QuickMenu>
      <OfficeOrb>
        <OrbLogo />
      </OfficeOrb>
      <KeyTip $x={14} $y={15}>F</KeyTip>
      <KeyTip $x={51} $y={12}>1</KeyTip>
      <KeyTip $x={78} $y={12} $dim>2</KeyTip>
      <KeyTip $x={110} $y={12} $dim>3</KeyTip>
      {KEYTIPS.map(([k, x, y]) => (
        <KeyTip key={k} $x={x} $y={y}>{k}</KeyTip>
      ))}
      <HelpDot>?</HelpDot>

      <TabRow>
        {TABS.map((t) => (
          <Tab key={t.label} $w={t.w} $active={t.active}>{t.label}</Tab>
        ))}
      </TabRow>

      <Ribbon>
        <Group $w={152}>
          <GroupBody>
            <Big $w={48}>
              <BigIcon><Paste /></BigIcon>
              Paste
              <BigCaret />
            </Big>
            <Column $left={2}>
              <SmallCmd><Cut />Cut</SmallCmd>
              <SmallCmd><Copy />Copy</SmallCmd>
              <SmallCmd><Brush />Format Painter</SmallCmd>
            </Column>
          </GroupBody>
          <GroupFoot $launcher>Clipboard<Launcher /></GroupFoot>
        </Group>

        <Group $w={195} $gap={4}>
          <GroupBody $pad={2}>
            <Column $top={9} $gap={8}>
              <Line>
                <Combo $w={97}>Calibri<Caret /></Combo>
                <Combo $w={42}>11<Caret /></Combo>
                <BtnGroup $left={5}>
                  <ToolBtn><Glyph $size={16} $serif>A</Glyph><TinyUp /></ToolBtn>
                  <ToolBtn><Glyph $size={12} $serif>A</Glyph><TinyDown /></ToolBtn>
                </BtnGroup>
              </Line>
              <Line $left={2}>
                <BtnGroup>
                  <ToolBtn $w={21}><Glyph $size={14} $serif>B</Glyph></ToolBtn>
                  <ToolBtn $w={23}><Glyph $size={14} $serif $italic>I</Glyph></ToolBtn>
                  <ToolBtn $w={22} $on><Underline /></ToolBtn>
                  <ToolBtn $w={10}><Caret $m={0} /></ToolBtn>
                </BtnGroup>
                <BtnGroup $left={4}>
                  <ToolBtn $w={22}><Borders /></ToolBtn>
                  <ToolBtn $w={10}><Caret $m={0} /></ToolBtn>
                </BtnGroup>
                <BtnGroup $left={5}>
                  <ToolBtn $w={22}><Fill /></ToolBtn>
                  <ToolBtn $w={10}><Caret $m={0} /></ToolBtn>
                  <ToolBtn $w={22}><FontColor /></ToolBtn>
                  <ToolBtn $w={10}><Caret $m={0} /></ToolBtn>
                </BtnGroup>
              </Line>
            </Column>
          </GroupBody>
          <GroupFoot $launcher>Font<Launcher /></GroupFoot>
        </Group>

        <Group $w={251}>
          <GroupBody $pad={4}>
            <Column $top={9} $gap={8}>
              <Line>
                <BtnGroup>
                  <ToolBtn><Lines rows={[2, 4, 6]} /></ToolBtn>
                  <ToolBtn><Lines rows={[5, 7, 9]} /></ToolBtn>
                  <ToolBtn $on><Lines rows={[8, 10, 12]} /></ToolBtn>
                </BtnGroup>
                <BtnGroup $left={3}>
                  <ToolBtn $w={29}><Orient /><Caret $m={1} /></ToolBtn>
                </BtnGroup>
              </Line>
              <Line>
                <BtnGroup>
                  <ToolBtn $on><Aligned side="l" /></ToolBtn>
                  <ToolBtn><Aligned side="c" /></ToolBtn>
                  <ToolBtn><Aligned side="r" /></ToolBtn>
                </BtnGroup>
                <BtnGroup $left={3}>
                  <ToolBtn><Indent /></ToolBtn>
                  <ToolBtn $w={21}><Indent flip /></ToolBtn>
                </BtnGroup>
              </Line>
            </Column>
            <Divider />
            <Column $top={9} $gap={6}>
              <WrapBtn><WrapIcon />Wrap Text</WrapBtn>
              <SmallCmd $left={4}><MergeIcon />Merge &amp; Center<Caret /></SmallCmd>
            </Column>
          </GroupBody>
          <GroupFoot $launcher>Alignment<Launcher /></GroupFoot>
        </Group>

        <Group $w={136}>
          <GroupBody $pad={3}>
            <Column $top={9} $gap={8}>
              <Combo $w={129}>General<Caret /></Combo>
              <Line>
                <BtnGroup>
                  <ToolBtn $w={33}><Glyph $size={13}>$</Glyph><Caret $m={9} /></ToolBtn>
                  <ToolBtn $w={22}><Glyph $size={13} $weight={400}>%</Glyph></ToolBtn>
                  <ToolBtn $w={22}><Glyph $size={13}>,</Glyph></ToolBtn>
                </BtnGroup>
                <BtnGroup $left={4}>
                  <ToolBtn $w={22}><DecUp /></ToolBtn>
                  <ToolBtn $w={21}><DecDown /></ToolBtn>
                </BtnGroup>
              </Line>
            </Column>
          </GroupBody>
          <GroupFoot $launcher>Number<Launcher /></GroupFoot>
        </Group>

        <Group $w={174}>
          <GroupBody $pad={2}>
            <Big $w={70}>
              <BigIcon><CondFormat /></BigIcon>
              Conditional
              <Line>Formatting<Caret /></Line>
            </Big>
            <Big $w={54}>
              <BigIcon><TableIcon /></BigIcon>
              Format
              <Line>as Table<Caret /></Line>
            </Big>
            <Big $w={42}>
              <BigIcon $nudge={8}><StylesIcon /></BigIcon>
              Cell
              <Line>Styles<Caret /></Line>
            </Big>
          </GroupBody>
          <GroupFoot>Styles</GroupFoot>
        </Group>

        <Group $w={134}>
          <GroupBody $pad={2}>
            <Big $w={42}>
              <BigIcon><InsertIcon /></BigIcon>
              Insert
              <BigCaret />
            </Big>
            <Big $w={42}>
              <BigIcon><DeleteIcon /></BigIcon>
              Delete
              <BigCaret />
            </Big>
            <Big $w={42}>
              <BigIcon><FormatIcon /></BigIcon>
              Format
              <BigCaret />
            </Big>
          </GroupBody>
          <GroupFoot>Cells</GroupFoot>
        </Group>

        <Group $w={176}>
          <GroupBody $pad={7}>
            <Column $w={79}>
              <SmallCmd $gap={4}><SigmaIcon />AutoSum<Caret $m={4} /></SmallCmd>
              <SmallCmd $gap={4}><FillIcon />Fill<Caret /></SmallCmd>
              <SmallCmd $gap={1}><Eraser />Clear<Caret /></SmallCmd>
            </Column>
            <Big $w={40}>
              <BigIcon><SortIcon /></BigIcon>
              Sort &amp;
              <Line>Filter<Caret /></Line>
            </Big>
            <Big $w={42}>
              <BigIcon><Binoculars /></BigIcon>
              Find &amp;
              <Line>Select<Caret /></Line>
            </Big>
          </GroupBody>
          <GroupFoot>Editing</GroupFoot>
        </Group>
      </Ribbon>

      <FormulaRow>
        <NameBox>A1<NameCaret /></NameBox>
        <FxPill><FxDot />fx</FxPill>
        <FormulaInput>Add new record</FormulaInput>
        <ExpandBtn><DoubleChevron /></ExpandBtn>
      </FormulaRow>

      <Workbook>
        <WinTitle>
          <XlDoc />
          <WinName>defaultcs.aspx  [Read-Only]</WinName>
          <WinButtons>
            <Minimize />
            <Restore />
            <Close />
          </WinButtons>
        </WinTitle>
        <SheetArea>
          <Sheet>
            <HeaderRow>
              <Corner />
              {COLUMNS.map((c, i) => (
                <ColHead key={c.name} $w={c.w} $on={i === 0}>{c.name}</ColHead>
              ))}
            </HeaderRow>
            <Row>
              <RowHead $on>1</RowHead>
              <ActiveCell $w={197}><LinkText>Add new record</LinkText></ActiveCell>
              <Cell $w={160} $pad={72}><LinkText>{"Refresh   |      "}</LinkText></Cell>
            </Row>
            <Row>
              <RowHead>2</RowHead>
              <Cell $w={197} $pad={140}><LinkText>Customer ID</LinkText></Cell>
              <Cell $w={160} />
              <HeadCell $w={183}><LinkText>Company Name</LinkText></HeadCell>
              <HeadCell $w={238}><LinkText>Contact Name</LinkText></HeadCell>
              <HeadCell $w={146}><LinkText>Contact Title</LinkText></HeadCell>
              <HeadCell $w={150}><LinkText>Address</LinkText></HeadCell>
              <HeadCell $w={141}><LinkText>Postal Code</LinkText></HeadCell>
            </Row>
            <Row>
              <RowHead>3</RowHead>
              <Cell $w={197}>WOLZA</Cell>
              <Cell $w={160} />
              <Cell $w={183} $ls={0.6}>Wolski Zajazd</Cell>
              <Cell $w={238} $ls={0.3}>Zbyszek Piestrzeniewicz</Cell>
              <Cell $w={146} $ls={0.3}>Owner</Cell>
              <Cell $w={150} $ls={0.6}>ul. Filtrowa 68</Cell>
              <Cell $w={141} $ls={0.6}>01-012</Cell>
            </Row>
            <Row>
              <RowHead>4</RowHead>
              <Cell $w={197} $pad={117} $ls={0.7}>12345678910</Cell>
            </Row>
            <Row>
              <RowHead>5</RowHead>
              <Cell $w={197} $pad={5} $ls={0.3}>Item <b>91</b> to <b>91</b> of <b>91</b></Cell>
            </Row>
            <Row>
              <RowHead>6</RowHead>
              <Cell $w={197}>Page:</Cell>
            </Row>
            <Row>
              <RowHead>7</RowHead>
              <PagerFirst $w={66}>10</PagerFirst>
              <PagerCell $w={65}>10</PagerCell>
              <PagerCell $w={93} $last>10</PagerCell>
            </Row>
            <Row>
              <RowHead>8</RowHead>
              <PagerFirst $w={66}>10</PagerFirst>
              <PagerCell $w={65}>10</PagerCell>
              <PagerCell $w={93} $last>10</PagerCell>
            </Row>
            {EMPTY_ROWS.map((n) => (
              <Row key={n}>
                <RowHead>{n}</RowHead>
              </Row>
            ))}
          </Sheet>
          <VScroll>
            <ScrollSplit />
            <ScrollUp><ScrollArrow /></ScrollUp>
            <ScrollThumb><Grip /></ScrollThumb>
          </VScroll>
        </SheetArea>
      </Workbook>

      <StatusBar>
        <StatusCell $w={47}>Ready</StatusCell>
        <StatusCell $w={34}><Macro /></StatusCell>
        <StatusFill />
        <ViewSwitch>
          <ViewBtn $on><ViewNormal /></ViewBtn>
          <ViewBtn><ViewPage /></ViewBtn>
          <ViewBtn><ViewBreak /></ViewBtn>
        </ViewSwitch>
        <Zoom>
          100%
          <ZoomBtn $left={10}><ZoomMinus /></ZoomBtn>
          <ZoomTrack><ZoomThumb /></ZoomTrack>
          <ZoomBtn $left={0}><ZoomPlus /></ZoomBtn>
        </Zoom>
      </StatusBar>
      <TaskBar><StartEdge /><TrayEdge /></TaskBar>
    </Page>
  );
}
